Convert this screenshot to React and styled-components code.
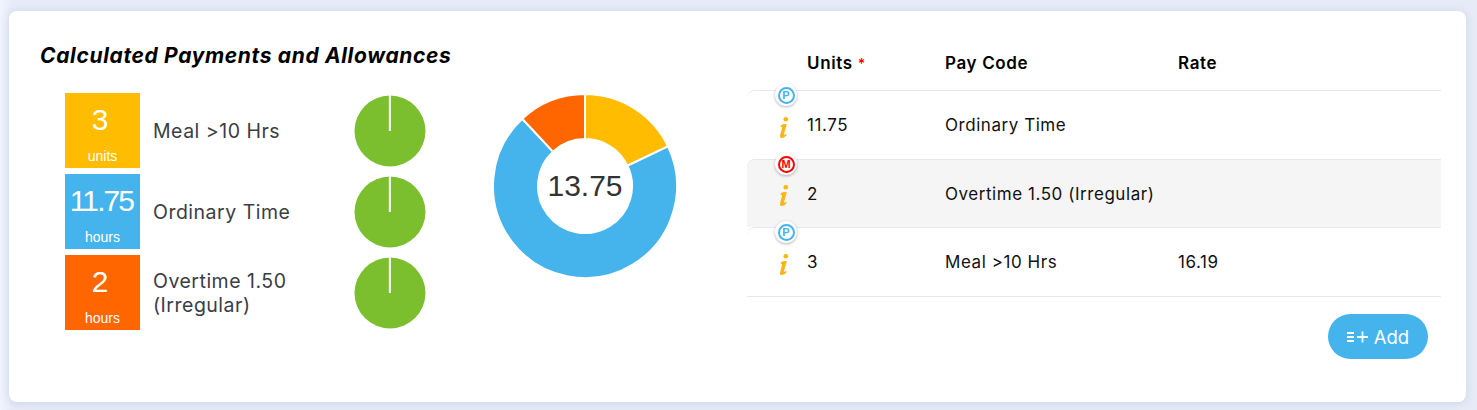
import React from "react";
import styled, { createGlobalStyle } from "styled-components";

const Global = createGlobalStyle`
  html, body { margin: 0; padding: 0; }
  body {
    width: 1477px; height: 410px; overflow: hidden;
    background: linear-gradient(90deg, #f0f4fd 0, #e6ebf7 12px, #e6ebf7 100%);
    font-family: Inter, "Liberation Sans", sans-serif;
  }
`;
const Page = styled.div`
  box-sizing: border-box; height: 410px; padding: 11px 11px 8px 9px; display: flex;
`;
const Card = styled.main`
  flex: 1; display: flex; background: #fff; border-radius: 8px;
  box-shadow: 0 1px 8px rgba(150, 165, 210, 0.35);
`;
const Left = styled.section`
  width: 738px; box-sizing: border-box; padding: 32px 0 0 31px; display: flex; flex-direction: column;
`;
const Title = styled.h2`
  margin: 0; font-size: 21px; line-height: 26px; font-weight: 700; font-style: italic; color: #000;
  letter-spacing: 0.65px; white-space: nowrap;
`;
const Summary = styled.div`
  display: flex; margin-top: 24px; padding-left: 25px;
`;
const Items = styled.div`
  width: 427px; display: flex; flex-direction: column; gap: 6px;
`;
const Item = styled.div`
  display: grid; grid-template-columns: 75px 214px 72px; align-items: center; height: 75px;
`;
const Tile = styled.div`
  width: 75px; height: 75px; display: flex; flex-direction: column; align-items: center;
  background: ${p => p.$color}; color: #fff; font-family: "Liberation Sans", Arial, sans-serif;
`;
const TileValue = styled.span`
  font-size: 30px; line-height: 34px; margin: 10px ${p => (p.$tight ? "2px" : "5px")} 0 0;
  letter-spacing: ${p => (p.$tight ? "-1.9px" : "0")};
`;
const TileUnit = styled.span`
  font-size: 14px; line-height: 16px; margin-top: 11px;
`;
const ItemLabel = styled.div`
  padding-left: 13px; font-size: 19.5px; line-height: 24px; color: #3c3c46; letter-spacing: 0.5px;
`;
const Donut = styled.div`
  position: relative; width: 186px; height: 186px; margin: 0;
`;
const DonutTotal = styled.div`
  position: absolute; inset: 0; display: flex; align-items: center; justify-content: center;
  font-family: "Liberation Sans", Arial, sans-serif; font-size: 30px; color: #333;
`;
const Right = styled.section`
  width: 694px; display: flex; flex-direction: column; padding-top: 35px;
`;
const Row = styled.div`
  position: relative; display: grid; grid-template-columns: 60px 138px 233px 1fr; align-items: center;
  box-sizing: border-box; height: ${p => p.$h || 68}px; border-top: 1px solid #e5e8f0;
  border-radius: 8px 0 0 0;
  background: ${p => (p.$shade ? "#f5f5f5" : "transparent")};
  font-size: 17px; letter-spacing: 0.55px; color: #111;
`;
const HeaderRow = styled.div`
  display: grid; grid-template-columns: 60px 138px 233px 1fr; align-items: center; height: 44px;
  box-sizing: border-box; padding-bottom: 10px;
  font-size: 17px; letter-spacing: 0.65px; font-weight: 600; color: #000;
`;
const Star = styled.span`color: #f00; font-size: 14px;`;
const RowEnd = styled.div`height: 0; border-top: 1px solid #e5e8f0;`;
const Badge = styled.span`
  position: absolute; left: 28px; top: -7px; width: 22px; height: 22px; border-radius: 50%;
  background: #fff; box-shadow: 0 1px 3px rgba(0,0,0,.3); display: flex; align-items: center; justify-content: center;
`;
const BadgeRing = styled.span`
  box-sizing: border-box; width: 17px; height: 17px; border-radius: 50%; border: 2px solid ${p => p.$color};
  color: ${p => p.$color}; font: 700 11px/13px "Liberation Sans", Arial, sans-serif; letter-spacing: 0; text-align: center;
`;
const InfoMark = styled.svg`
  justify-self: start; margin-left: 32px; margin-top: 4px;
`;
const Footer = styled.div`
  display: flex; justify-content: flex-end; padding: 17px 13px 0 0;
`;
const AddButton = styled.button`
  display: flex; align-items: center; justify-content: center; gap: 6px; width: 100px; height: 45px;
  border: 0; border-radius: 23px; background: #45b4ed; color: #fff; font: 400 18.5px Inter, sans-serif;
`;

const Pie = () => (
  <svg width="72" height="72" viewBox="0 0 72 72">
    <circle cx="36" cy="36" r="35.5" fill="#7cbf2e" />
    <rect x="34.8" y="0" width="2.2" height="36" fill="#f3f5e6" />
  </svg>
);

const polar = (r, f) => {
  const a = f * 2 * Math.PI;
  return [93 + r * Math.sin(a), 93 - r * Math.cos(a)];
};
const segPath = (from, to) => {
  const [x1, y1] = polar(92, from), [x2, y2] = polar(92, to), [x3, y3] = polar(47, to), [x4, y4] = polar(47, from);
  const large = to - from > 0.5 ? 1 : 0;
  return `M${x1} ${y1}A92 92 0 ${large} 1 ${x2} ${y2}L${x3} ${y3}A47 47 0 ${large} 0 ${x4} ${y4}Z`;
};
const total = 16.75;
const segs = [
  [0, 3 / total, "#ffbc00"],
  [3 / total, 14.75 / total, "#45b4ed"],
  [14.75 / total, 1, "#ff6600"],
];

const items = [
  { v: "3", u: "units", label: "Meal >10 Hrs", c: "#ffbc00" },
  { v: "11.75", u: "hours", label: "Ordinary Time", c: "#45b4ed", tight: true },
  { v: "2", u: "hours", label: "Overtime 1.50 (Irregular)", c: "#ff6600" },
];
const rows = [
  { b: "P", bc: "#45b4ed", units: "11.75", code: "Ordinary Time", rate: "", h: 69 },
  { b: "M", bc: "#f00", units: "2", code: "Overtime 1.50 (Irregular)", rate: "", h: 68, shade: true },
  { b: "P", bc: "#45b4ed", units: "3", code: "Meal >10 Hrs", rate: "16.19", h: 69 },
];

export default function App() {
  return (
    <Page>
      <Global />
      <Card>
        <Left>
          <Title>Calculated Payments and Allowances</Title>
          <Summary>
            <Items>
              {items.map(it => (
                <Item key={it.label}>
                  <Tile $color={it.c}>
                    <TileValue $tight={it.tight}>{it.v}</TileValue>
                    <TileUnit>{it.u}</TileUnit>
                  </Tile>
                  <ItemLabel>{it.label}</ItemLabel>
                  <Pie />
                </Item>
              ))}
            </Items>
            <Donut>
              <svg width="186" height="186" viewBox="0 0 186 186">
                {segs.map(([a, b, c]) => (
                  <path key={c} d={segPath(a, b)} fill={c} stroke="#fff" strokeWidth="2" />
                ))}
              </svg>
              <DonutTotal>13.75</DonutTotal>
            </Donut>
          </Summary>
        </Left>
        <Right>
          <HeaderRow>
            <span />
            <span>Units <Star>*</Star></span>
            <span>Pay Code</span>
            <span>Rate</span>
          </HeaderRow>
          {rows.map(r => (
            <Row key={r.code} $shade={r.shade} $h={r.h}>
              <Badge><BadgeRing $color={r.bc}>{r.b}</BadgeRing></Badge>
              <InfoMark width="10" height="21" viewBox="0 0 9 20" fill="#fdb515">
                <circle cx="6.2" cy="2.2" r="2.2" />
                <path d="M3.2 7L7.2 6.6L4.6 16C4.3 17 5 17.3 6.6 16.2L7.2 16.8C5.6 18.8 4 19.9 2.2 19.9C.8 19.9 .3 19 .7 17.6L2.6 10.4C2.8 9.6 2.2 9.3 1.3 9.2L1.4 8.2Z" />
              </InfoMark>
              <span>{r.units}</span>
              <span>{r.code}</span>
              <span>{r.rate}</span>
            </Row>
          ))}
          <RowEnd />
          <Footer>
            <AddButton>
              <svg width="21" height="12" viewBox="0 0 21 12" stroke="#fff" strokeWidth="1.8" fill="none">
                <path d="M0 2h7M0 6h7M0 10h7M10 6h11M15.5 .5v11" />
              </svg>
              Add
            </AddButton>
          </Footer>
        </Right>
      </Card>
    </Page>
  );
}
